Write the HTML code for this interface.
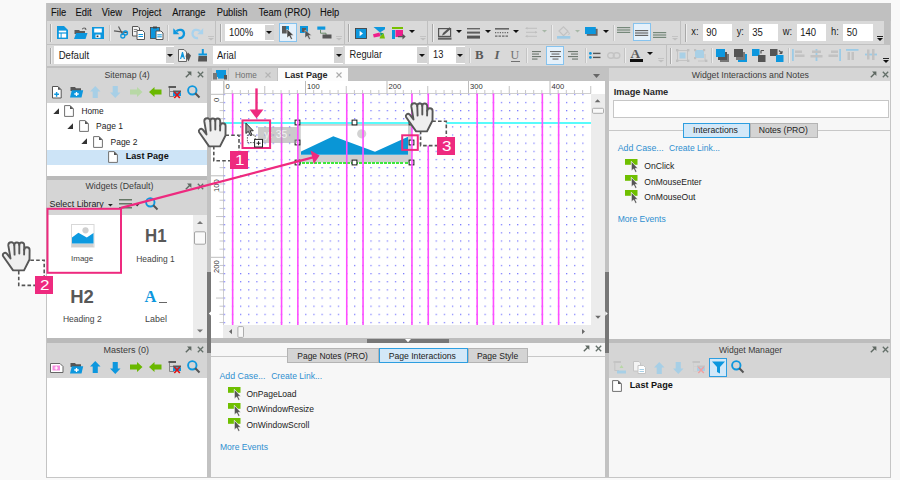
<!DOCTYPE html>
<html><head><meta charset="utf-8"><style>
html,body{margin:0;padding:0;}
body{width:900px;height:480px;overflow:hidden;position:relative;background:#f9f9f9;font-family:"Liberation Sans",sans-serif;}
.a{position:absolute;}
.t{position:absolute;white-space:nowrap;}
svg{overflow:visible;}
</style></head><body>
<div class="a" style="left:46px;top:3px;width:845px;height:475px;background:#c0c0c0;"></div>
<div class="a" style="left:46px;top:3px;width:1px;height:475px;background:#c4c4c4;"></div>
<div class="t" style="left:51.1px;top:8.69px;font-size:9.35px;line-height:9.35px;color:#111;font-weight:400;font-family:'Liberation Sans', sans-serif;transform-origin:0 7.91px;transform:scale(1.0,1.14);-webkit-text-stroke:0.1px #111;">File</div>
<div class="t" style="left:75.5px;top:8.69px;font-size:9.35px;line-height:9.35px;color:#111;font-weight:400;font-family:'Liberation Sans', sans-serif;transform-origin:0 7.91px;transform:scale(1.0,1.14);-webkit-text-stroke:0.1px #111;">Edit</div>
<div class="t" style="left:101.8px;top:8.69px;font-size:9.35px;line-height:9.35px;color:#111;font-weight:400;font-family:'Liberation Sans', sans-serif;transform-origin:0 7.91px;transform:scale(1.0,1.14);-webkit-text-stroke:0.1px #111;">View</div>
<div class="t" style="left:132.2px;top:8.69px;font-size:9.35px;line-height:9.35px;color:#111;font-weight:400;font-family:'Liberation Sans', sans-serif;transform-origin:0 7.91px;transform:scale(1.0,1.14);-webkit-text-stroke:0.1px #111;">Project</div>
<div class="t" style="left:172.2px;top:8.69px;font-size:9.35px;line-height:9.35px;color:#111;font-weight:400;font-family:'Liberation Sans', sans-serif;transform-origin:0 7.91px;transform:scale(1.0,1.14);-webkit-text-stroke:0.1px #111;">Arrange</div>
<div class="t" style="left:216.7px;top:8.69px;font-size:9.35px;line-height:9.35px;color:#111;font-weight:400;font-family:'Liberation Sans', sans-serif;transform-origin:0 7.91px;transform:scale(1.0,1.14);-webkit-text-stroke:0.1px #111;">Publish</div>
<div class="t" style="left:258.7px;top:8.69px;font-size:9.35px;line-height:9.35px;color:#111;font-weight:400;font-family:'Liberation Sans', sans-serif;transform-origin:0 7.91px;transform:scale(1.0,1.14);-webkit-text-stroke:0.1px #111;">Team (PRO)</div>
<div class="t" style="left:320px;top:8.69px;font-size:9.35px;line-height:9.35px;color:#111;font-weight:400;font-family:'Liberation Sans', sans-serif;transform-origin:0 7.91px;transform:scale(1.0,1.14);-webkit-text-stroke:0.1px #111;">Help</div>
<div class="a" style="left:47px;top:21px;width:168px;height:23px;background:#d9d9d9;"></div>
<div class="a" style="left:216px;top:21px;width:128px;height:23px;background:#d9d9d9;"></div>
<div class="a" style="left:345px;top:21px;width:81.5px;height:23px;background:#d9d9d9;"></div>
<div class="a" style="left:427.5px;top:21px;width:252.5px;height:23px;background:#d9d9d9;"></div>
<div class="a" style="left:681px;top:21px;width:203px;height:23px;background:#d9d9d9;"></div>
<div class="a" style="left:47px;top:45px;width:619px;height:21px;background:#d9d9d9;"></div>
<div class="a" style="left:667px;top:45px;width:223px;height:21px;background:#d9d9d9;"></div>
<div class="a" style="left:50px;top:24px;width:1px;height:18px;background:#a8a8a8;"></div>
<div class="a" style="left:51px;top:24px;width:1px;height:18px;background:#eeeeee;"></div>
<div class="a" style="left:220px;top:24px;width:1px;height:18px;background:#a8a8a8;"></div>
<div class="a" style="left:221px;top:24px;width:1px;height:18px;background:#eeeeee;"></div>
<div class="a" style="left:348px;top:24px;width:1px;height:18px;background:#a8a8a8;"></div>
<div class="a" style="left:349px;top:24px;width:1px;height:18px;background:#eeeeee;"></div>
<div class="a" style="left:432px;top:24px;width:1px;height:18px;background:#a8a8a8;"></div>
<div class="a" style="left:433px;top:24px;width:1px;height:18px;background:#eeeeee;"></div>
<div class="a" style="left:684.5px;top:24px;width:1px;height:18px;background:#a8a8a8;"></div>
<div class="a" style="left:685.5px;top:24px;width:1px;height:18px;background:#eeeeee;"></div>
<div class="a" style="left:50px;top:48px;width:1px;height:16px;background:#a8a8a8;"></div>
<div class="a" style="left:51px;top:48px;width:1px;height:16px;background:#eeeeee;"></div>
<div class="a" style="left:670px;top:48px;width:1px;height:16px;background:#a8a8a8;"></div>
<div class="a" style="left:671px;top:48px;width:1px;height:16px;background:#eeeeee;"></div>
<div class="a" style="left:109px;top:25px;width:1px;height:16px;background:#c4c4c4;"></div>
<div class="a" style="left:110px;top:25px;width:1px;height:16px;background:#ececec;"></div>
<div class="a" style="left:167px;top:25px;width:1px;height:16px;background:#c4c4c4;"></div>
<div class="a" style="left:168px;top:25px;width:1px;height:16px;background:#ececec;"></div>
<div class="a" style="left:551px;top:25px;width:1px;height:16px;background:#c4c4c4;"></div>
<div class="a" style="left:552px;top:25px;width:1px;height:16px;background:#ececec;"></div>
<div class="a" style="left:613px;top:25px;width:1px;height:16px;background:#c4c4c4;"></div>
<div class="a" style="left:614px;top:25px;width:1px;height:16px;background:#ececec;"></div>
<div class="a" style="left:469px;top:48px;width:1px;height:15px;background:#c4c4c4;"></div>
<div class="a" style="left:470px;top:48px;width:1px;height:15px;background:#ececec;"></div>
<div class="a" style="left:526px;top:48px;width:1px;height:15px;background:#c4c4c4;"></div>
<div class="a" style="left:527px;top:48px;width:1px;height:15px;background:#ececec;"></div>
<div class="a" style="left:585px;top:48px;width:1px;height:15px;background:#c4c4c4;"></div>
<div class="a" style="left:586px;top:48px;width:1px;height:15px;background:#ececec;"></div>
<div class="a" style="left:624px;top:48px;width:1px;height:15px;background:#c4c4c4;"></div>
<div class="a" style="left:625px;top:48px;width:1px;height:15px;background:#ececec;"></div>
<div class="a" style="left:711px;top:48px;width:1px;height:15px;background:#c4c4c4;"></div>
<div class="a" style="left:712px;top:48px;width:1px;height:15px;background:#ececec;"></div>
<div class="a" style="left:788px;top:48px;width:1px;height:15px;background:#c4c4c4;"></div>
<div class="a" style="left:789px;top:48px;width:1px;height:15px;background:#ececec;"></div>
<div class="a" style="left:224.7px;top:24px;width:49.3px;height:16.7px;background:#ffffff;"></div>
<div class="a" style="left:264.7px;top:24.5px;width:9.3px;height:15.7px;background:#d4d4d4;"></div>
<svg class="a" style="left:266.34999999999997px;top:30.85px;" width="6" height="3" viewBox="0 0 6 3"><path d="M0 0H6L3 3Z" fill="#111"/></svg>
<div class="t" style="left:229px;top:28.16px;font-size:9.5px;line-height:9.5px;color:#1a1a1a;font-weight:400;font-family:'Liberation Sans', sans-serif;transform-origin:0 8.04px;transform:scale(1.0,1.1);">100%</div>
<div class="t" style="left:691.3px;top:28.29px;font-size:9.35px;line-height:9.35px;color:#1a1a1a;font-weight:400;font-family:'Liberation Sans', sans-serif;transform-origin:0 7.91px;transform:scale(1.0,1.1);">x:</div>
<div class="a" style="left:702.7px;top:24px;width:29.5px;height:16.6px;background:#ffffff;"></div>
<div class="t" style="left:706.2px;top:28.16px;font-size:9.5px;line-height:9.5px;color:#1a1a1a;font-weight:400;font-family:'Liberation Sans', sans-serif;transform-origin:0 8.04px;transform:scale(1.0,1.1);">90</div>
<div class="t" style="left:736.7px;top:28.29px;font-size:9.35px;line-height:9.35px;color:#1a1a1a;font-weight:400;font-family:'Liberation Sans', sans-serif;transform-origin:0 7.91px;transform:scale(1.0,1.1);">y:</div>
<div class="a" style="left:748.7px;top:24px;width:29.5px;height:16.6px;background:#ffffff;"></div>
<div class="t" style="left:752.2px;top:28.16px;font-size:9.5px;line-height:9.5px;color:#1a1a1a;font-weight:400;font-family:'Liberation Sans', sans-serif;transform-origin:0 8.04px;transform:scale(1.0,1.1);">35</div>
<div class="t" style="left:782.7px;top:28.29px;font-size:9.35px;line-height:9.35px;color:#1a1a1a;font-weight:400;font-family:'Liberation Sans', sans-serif;transform-origin:0 7.91px;transform:scale(1.0,1.1);">w:</div>
<div class="a" style="left:796.7px;top:24px;width:29.5px;height:16.6px;background:#ffffff;"></div>
<div class="t" style="left:800.2px;top:28.16px;font-size:9.5px;line-height:9.5px;color:#1a1a1a;font-weight:400;font-family:'Liberation Sans', sans-serif;transform-origin:0 8.04px;transform:scale(1.0,1.1);">140</div>
<div class="t" style="left:831px;top:28.29px;font-size:9.35px;line-height:9.35px;color:#1a1a1a;font-weight:400;font-family:'Liberation Sans', sans-serif;transform-origin:0 7.91px;transform:scale(1.0,1.1);">h:</div>
<div class="a" style="left:843.2px;top:24px;width:29.5px;height:16.6px;background:#ffffff;"></div>
<div class="t" style="left:846.7px;top:28.16px;font-size:9.5px;line-height:9.5px;color:#1a1a1a;font-weight:400;font-family:'Liberation Sans', sans-serif;transform-origin:0 8.04px;transform:scale(1.0,1.1);">50</div>
<div class="a" style="left:54px;top:46px;width:120px;height:18px;background:#ffffff;"></div>
<div class="a" style="left:166px;top:47px;width:8px;height:16px;background:#d4d4d4;"></div>
<svg class="a" style="left:167.0px;top:53.5px;" width="6" height="3" viewBox="0 0 6 3"><path d="M0 0H6L3 3Z" fill="#111"/></svg>
<div class="t" style="left:58.7px;top:51.17px;font-size:9.6px;line-height:9.6px;color:#1a1a1a;font-weight:400;font-family:'Liberation Sans', sans-serif;transform-origin:0 8.13px;transform:scale(1.0,1.12);">Default</div>
<div class="a" style="left:213px;top:46px;width:130px;height:18px;background:#ffffff;"></div>
<div class="a" style="left:334px;top:47px;width:9px;height:16px;background:#d4d4d4;"></div>
<svg class="a" style="left:335.5px;top:53.5px;" width="6" height="3" viewBox="0 0 6 3"><path d="M0 0H6L3 3Z" fill="#111"/></svg>
<div class="t" style="left:217px;top:51.26px;font-size:9.5px;line-height:9.5px;color:#1a1a1a;font-weight:400;font-family:'Liberation Sans', sans-serif;transform-origin:0 8.04px;transform:scale(1.0,1.12);">Arial</div>
<div class="a" style="left:345.3px;top:46px;width:81.4px;height:18px;background:#ffffff;"></div>
<div class="a" style="left:417.3px;top:47px;width:9.4px;height:16px;background:#d4d4d4;"></div>
<svg class="a" style="left:419.0px;top:53.5px;" width="6" height="3" viewBox="0 0 6 3"><path d="M0 0H6L3 3Z" fill="#111"/></svg>
<div class="t" style="left:349.5px;top:51.43px;font-size:9.3px;line-height:9.3px;color:#1a1a1a;font-weight:400;font-family:'Liberation Sans', sans-serif;transform-origin:0 7.87px;transform:scale(1.0,1.12);">Regular</div>
<div class="a" style="left:428.7px;top:46px;width:36px;height:18px;background:#ffffff;"></div>
<div class="a" style="left:456px;top:47px;width:8.7px;height:16px;background:#d4d4d4;"></div>
<svg class="a" style="left:457.35px;top:53.5px;" width="6" height="3" viewBox="0 0 6 3"><path d="M0 0H6L3 3Z" fill="#111"/></svg>
<div class="t" style="left:433px;top:51.43px;font-size:9.3px;line-height:9.3px;color:#1a1a1a;font-weight:400;font-family:'Liberation Sans', sans-serif;transform-origin:0 7.87px;transform:scale(1.0,1.12);">13</div>
<div class="a" style="left:47px;top:67.5px;width:160px;height:35.5px;background:#d5d5d5;"></div>
<div class="a" style="left:47px;top:103px;width:160px;height:72.5px;background:#ffffff;"></div>
<div class="a" style="left:47px;top:175.5px;width:160px;height:4.5px;background:#bababa;"></div>
<div class="a" style="left:47px;top:180px;width:160px;height:35px;background:#d5d5d5;"></div>
<div class="a" style="left:47px;top:214.5px;width:146px;height:123.5px;background:#ffffff;"></div>
<div class="a" style="left:193px;top:214.5px;width:14px;height:123.5px;background:#ececec;"></div>
<div class="a" style="left:47px;top:338px;width:160px;height:5px;background:#bababa;"></div>
<div class="a" style="left:47px;top:343px;width:160px;height:34.5px;background:#d5d5d5;"></div>
<div class="a" style="left:47px;top:377.5px;width:160px;height:99.5px;background:#ffffff;"></div>
<div class="a" style="left:207px;top:67.5px;width:4px;height:410.5px;background:#c2c2c2;"></div>
<div class="a" style="left:207px;top:271.7px;width:4px;height:81.5px;background:#777777;"></div>
<div class="a" style="left:211px;top:67.5px;width:394px;height:13.5px;background:#c2c2c2;"></div>
<div class="a" style="left:211px;top:81px;width:394px;height:257px;background:#ffffff;"></div>
<div class="a" style="left:211px;top:338px;width:394px;height:5px;background:#bdbdbd;"></div>
<div class="a" style="left:367.3px;top:339px;width:81.4px;height:3.7px;background:#777777;"></div>
<div class="a" style="left:211px;top:343px;width:394px;height:134px;background:#f7f7f7;"></div>
<div class="a" style="left:605px;top:67.5px;width:4px;height:410.5px;background:#c2c2c2;"></div>
<div class="a" style="left:605px;top:271.7px;width:4px;height:81.5px;background:#777777;"></div>
<div class="a" style="left:609px;top:67.5px;width:281px;height:13.8px;background:#d5d5d5;"></div>
<div class="a" style="left:609px;top:81.3px;width:281px;height:257.7px;background:#f7f7f7;"></div>
<div class="a" style="left:609px;top:339px;width:281px;height:4px;background:#bdbdbd;"></div>
<div class="a" style="left:609px;top:343px;width:281px;height:34.5px;background:#d5d5d5;"></div>
<div class="a" style="left:609px;top:377.5px;width:281px;height:99.5px;background:#f7f7f7;"></div>
<div class="a" style="left:46px;top:477px;width:845px;height:1px;background:#c6c6c6;"></div>
<div class="a" style="left:890px;top:21px;width:1px;height:457px;background:#c6c6c6;"></div>
<div class="t" style="left:104.5px;top:70.79px;font-size:8.75px;line-height:8.75px;color:#3c3c3c;font-weight:400;font-family:'Liberation Sans', sans-serif;transform-origin:0 7.41px;transform:scale(1.0,1.08);">Sitemap (4)</div>
<div class="t" style="left:85.5px;top:182.15px;font-size:8.8px;line-height:8.8px;color:#3c3c3c;font-weight:400;font-family:'Liberation Sans', sans-serif;transform-origin:0 7.45px;transform:scale(1.0,1.08);">Widgets (Default)</div>
<div class="t" style="left:103.5px;top:345.58px;font-size:9.0px;line-height:9.0px;color:#3c3c3c;font-weight:400;font-family:'Liberation Sans', sans-serif;transform-origin:0 7.62px;transform:scale(1.0,1.08);">Masters (0)</div>
<div class="t" style="left:691.7px;top:70.79px;font-size:8.75px;line-height:8.75px;color:#3c3c3c;font-weight:400;font-family:'Liberation Sans', sans-serif;transform-origin:0 7.41px;transform:scale(1.0,1.08);">Widget Interactions and Notes</div>
<div class="t" style="left:718.9px;top:345.88px;font-size:8.65px;line-height:8.65px;color:#3c3c3c;font-weight:400;font-family:'Liberation Sans', sans-serif;transform-origin:0 7.32px;transform:scale(1.0,1.08);">Widget Manager</div>
<div class="t" style="left:49.5px;top:200.17px;font-size:8.9px;line-height:8.9px;color:#222;font-weight:400;font-family:'Liberation Sans', sans-serif;">Select Library</div>
<div class="t" style="left:81.5px;top:107.17px;font-size:8.3px;line-height:8.3px;color:#222;font-weight:400;font-family:'Liberation Sans', sans-serif;">Home</div>
<div class="t" style="left:96.1px;top:122.40px;font-size:8.5px;line-height:8.5px;color:#222;font-weight:400;font-family:'Liberation Sans', sans-serif;">Page 1</div>
<div class="t" style="left:110.5px;top:137.60px;font-size:8.5px;line-height:8.5px;color:#222;font-weight:400;font-family:'Liberation Sans', sans-serif;">Page 2</div>
<div class="a" style="left:47px;top:149.5px;width:160px;height:15px;background:#cde4f7;"></div>
<div class="t" style="left:125.75px;top:152.30px;font-size:9.1px;line-height:9.1px;color:#111;font-weight:700;font-family:'Liberation Sans', sans-serif;">Last Page</div>
<div class="t" style="left:71px;top:255.43px;font-size:8.0px;line-height:8.0px;color:#444;font-weight:400;font-family:'Liberation Sans', sans-serif;">Image</div>
<div class="t" style="left:136.25px;top:255.05px;font-size:8.45px;line-height:8.45px;color:#444;font-weight:400;font-family:'Liberation Sans', sans-serif;">Heading 1</div>
<div class="t" style="left:62.9px;top:315.40px;font-size:8.5px;line-height:8.5px;color:#444;font-weight:400;font-family:'Liberation Sans', sans-serif;">Heading 2</div>
<div class="t" style="left:145px;top:315.02px;font-size:8.95px;line-height:8.95px;color:#444;font-weight:400;font-family:'Liberation Sans', sans-serif;">Label</div>
<div class="t" style="left:145.2px;top:226.94px;font-size:18.5px;line-height:18.5px;color:#585858;font-weight:700;font-family:'Liberation Sans', sans-serif;transform-origin:0 15.66px;transform:scale(0.91,1.0);">H1</div>
<div class="t" style="left:70.2px;top:288.14px;font-size:18.5px;line-height:18.5px;color:#585858;font-weight:700;font-family:'Liberation Sans', sans-serif;">H2</div>
<div class="a" style="left:211.7px;top:68px;width:16.6px;height:12.7px;background:#d0d0d0;"></div>
<div class="a" style="left:229px;top:68px;width:47.7px;height:12.7px;background:#d4d4d4;"></div>
<div class="t" style="left:235px;top:72.32px;font-size:8.13px;line-height:8.13px;color:#6e6e6e;font-weight:400;font-family:'Liberation Sans', sans-serif;transform-origin:0 6.88px;transform:scale(1.0,1.12);">Home</div>
<div class="a" style="left:277.5px;top:68px;width:70px;height:13px;background:#fcfcfc;"></div>
<div class="t" style="left:284.7px;top:70.70px;font-size:9.1px;line-height:9.1px;color:#262626;font-weight:700;font-family:'Liberation Sans', sans-serif;">Last Page</div>
<div class="a" style="left:211px;top:355.5px;width:394px;height:1px;background:#c8c8c8;"></div>
<div class="a" style="left:287.3px;top:348px;width:91.4px;height:15.3px;background:#d4d4d4;border:1px solid #b4b4b4;box-sizing:border-box;"></div>
<div class="a" style="left:379px;top:348px;width:89px;height:15.3px;background:#d3e8f8;border:1px solid #2d9ee0;box-sizing:border-box;"></div>
<div class="a" style="left:468px;top:348px;width:60.4px;height:15.3px;background:#d4d4d4;border:1px solid #b4b4b4;box-sizing:border-box;"></div>
<div class="t" style="left:297.3px;top:352.42px;font-size:8.48px;line-height:8.48px;color:#222;font-weight:400;font-family:'Liberation Sans', sans-serif;transform-origin:0 7.18px;transform:scale(1.0,1.1);">Page Notes (PRO)</div>
<div class="t" style="left:388.7px;top:352.28px;font-size:8.65px;line-height:8.65px;color:#222;font-weight:400;font-family:'Liberation Sans', sans-serif;transform-origin:0 7.32px;transform:scale(1.0,1.1);">Page Interactions</div>
<div class="t" style="left:476.9px;top:352.35px;font-size:8.56px;line-height:8.56px;color:#222;font-weight:400;font-family:'Liberation Sans', sans-serif;transform-origin:0 7.25px;transform:scale(1.0,1.1);">Page Style</div>
<div class="t" style="left:219.5px;top:371.75px;font-size:8.8px;line-height:8.8px;color:#2f8fd0;font-weight:400;font-family:'Liberation Sans', sans-serif;">Add Case...</div>
<div class="t" style="left:271.2px;top:371.95px;font-size:8.57px;line-height:8.57px;color:#2f8fd0;font-weight:400;font-family:'Liberation Sans', sans-serif;">Create Link...</div>
<div class="t" style="left:246.4px;top:390.38px;font-size:8.53px;line-height:8.53px;color:#222;font-weight:400;font-family:'Liberation Sans', sans-serif;">OnPageLoad</div>
<div class="t" style="left:246.4px;top:405.08px;font-size:8.53px;line-height:8.53px;color:#222;font-weight:400;font-family:'Liberation Sans', sans-serif;">OnWindowResize</div>
<div class="t" style="left:246.4px;top:420.58px;font-size:8.53px;line-height:8.53px;color:#222;font-weight:400;font-family:'Liberation Sans', sans-serif;">OnWindowScroll</div>
<div class="t" style="left:220px;top:443.06px;font-size:8.55px;line-height:8.55px;color:#2f8fd0;font-weight:400;font-family:'Liberation Sans', sans-serif;">More Events</div>
<div class="t" style="left:613.7px;top:87.75px;font-size:9.27px;line-height:9.27px;color:#2a2a2a;font-weight:700;font-family:'Liberation Sans', sans-serif;">Image Name</div>
<div class="a" style="left:613.3px;top:99.5px;width:275.4px;height:18.2px;background:#ffffff;border:1.4px solid #c6c6c6;box-sizing:border-box;"></div>
<div class="a" style="left:609px;top:130px;width:281px;height:1px;background:#c8c8c8;"></div>
<div class="a" style="left:683px;top:122.5px;width:67px;height:15px;background:#d3e8f8;border:1px solid #2d9ee0;box-sizing:border-box;"></div>
<div class="a" style="left:750px;top:122.5px;width:68.3px;height:15px;background:#d4d4d4;border:1px solid #b4b4b4;box-sizing:border-box;"></div>
<div class="t" style="left:693px;top:125.84px;font-size:8.7px;line-height:8.7px;color:#222;font-weight:400;font-family:'Liberation Sans', sans-serif;transform-origin:0 7.36px;transform:scale(1.0,1.1);">Interactions</div>
<div class="t" style="left:758.7px;top:125.91px;font-size:8.61px;line-height:8.61px;color:#222;font-weight:400;font-family:'Liberation Sans', sans-serif;transform-origin:0 7.29px;transform:scale(1.0,1.1);">Notes (PRO)</div>
<div class="t" style="left:617.7px;top:143.75px;font-size:8.8px;line-height:8.8px;color:#2f8fd0;font-weight:400;font-family:'Liberation Sans', sans-serif;">Add Case...</div>
<div class="t" style="left:669px;top:143.95px;font-size:8.57px;line-height:8.57px;color:#2f8fd0;font-weight:400;font-family:'Liberation Sans', sans-serif;">Create Link...</div>
<div class="t" style="left:644.3px;top:161.72px;font-size:8.6px;line-height:8.6px;color:#222;font-weight:400;font-family:'Liberation Sans', sans-serif;">OnClick</div>
<div class="t" style="left:644.3px;top:177.68px;font-size:8.53px;line-height:8.53px;color:#222;font-weight:400;font-family:'Liberation Sans', sans-serif;">OnMouseEnter</div>
<div class="t" style="left:644.3px;top:193.02px;font-size:8.6px;line-height:8.6px;color:#222;font-weight:400;font-family:'Liberation Sans', sans-serif;">OnMouseOut</div>
<div class="t" style="left:617.7px;top:215.06px;font-size:8.55px;line-height:8.55px;color:#2f8fd0;font-weight:400;font-family:'Liberation Sans', sans-serif;">More Events</div>
<div class="t" style="left:629.8px;top:381.30px;font-size:9.1px;line-height:9.1px;color:#111;font-weight:700;font-family:'Liberation Sans', sans-serif;">Last Page</div>
<div class="a" style="left:223px;top:81px;width:1px;height:257px;background:#cfcfcf;"></div>
<div class="a" style="left:223px;top:93px;width:368.25px;height:1px;background:#cfcfcf;"></div>
<svg class="a" style="left:0px;top:0px;" width="900" height="480" viewBox="0 0 900 480"><rect x="223.50" y="81" width="1" height="12.5" fill="#bdbdbd"/><rect x="231.65" y="90" width="1" height="3.5" fill="#c8c8c8"/><rect x="239.80" y="90" width="1" height="3.5" fill="#c8c8c8"/><rect x="247.95" y="90" width="1" height="3.5" fill="#c8c8c8"/><rect x="256.10" y="90" width="1" height="3.5" fill="#c8c8c8"/><rect x="264.25" y="86" width="1" height="7.5" fill="#c4c4c4"/><rect x="272.40" y="90" width="1" height="3.5" fill="#c8c8c8"/><rect x="280.55" y="90" width="1" height="3.5" fill="#c8c8c8"/><rect x="288.70" y="90" width="1" height="3.5" fill="#c8c8c8"/><rect x="296.85" y="90" width="1" height="3.5" fill="#c8c8c8"/><rect x="305.00" y="81" width="1" height="12.5" fill="#bdbdbd"/><rect x="313.15" y="90" width="1" height="3.5" fill="#c8c8c8"/><rect x="321.30" y="90" width="1" height="3.5" fill="#c8c8c8"/><rect x="329.45" y="90" width="1" height="3.5" fill="#c8c8c8"/><rect x="337.60" y="90" width="1" height="3.5" fill="#c8c8c8"/><rect x="345.75" y="86" width="1" height="7.5" fill="#c4c4c4"/><rect x="353.90" y="90" width="1" height="3.5" fill="#c8c8c8"/><rect x="362.05" y="90" width="1" height="3.5" fill="#c8c8c8"/><rect x="370.20" y="90" width="1" height="3.5" fill="#c8c8c8"/><rect x="378.35" y="90" width="1" height="3.5" fill="#c8c8c8"/><rect x="386.50" y="81" width="1" height="12.5" fill="#bdbdbd"/><rect x="394.65" y="90" width="1" height="3.5" fill="#c8c8c8"/><rect x="402.80" y="90" width="1" height="3.5" fill="#c8c8c8"/><rect x="410.95" y="90" width="1" height="3.5" fill="#c8c8c8"/><rect x="419.10" y="90" width="1" height="3.5" fill="#c8c8c8"/><rect x="427.25" y="86" width="1" height="7.5" fill="#c4c4c4"/><rect x="435.40" y="90" width="1" height="3.5" fill="#c8c8c8"/><rect x="443.55" y="90" width="1" height="3.5" fill="#c8c8c8"/><rect x="451.70" y="90" width="1" height="3.5" fill="#c8c8c8"/><rect x="459.85" y="90" width="1" height="3.5" fill="#c8c8c8"/><rect x="468.00" y="81" width="1" height="12.5" fill="#bdbdbd"/><rect x="476.15" y="90" width="1" height="3.5" fill="#c8c8c8"/><rect x="484.30" y="90" width="1" height="3.5" fill="#c8c8c8"/><rect x="492.45" y="90" width="1" height="3.5" fill="#c8c8c8"/><rect x="500.60" y="90" width="1" height="3.5" fill="#c8c8c8"/><rect x="508.75" y="86" width="1" height="7.5" fill="#c4c4c4"/><rect x="516.90" y="90" width="1" height="3.5" fill="#c8c8c8"/><rect x="525.05" y="90" width="1" height="3.5" fill="#c8c8c8"/><rect x="533.20" y="90" width="1" height="3.5" fill="#c8c8c8"/><rect x="541.35" y="90" width="1" height="3.5" fill="#c8c8c8"/><rect x="549.50" y="81" width="1" height="12.5" fill="#bdbdbd"/><rect x="557.65" y="90" width="1" height="3.5" fill="#c8c8c8"/><rect x="565.80" y="90" width="1" height="3.5" fill="#c8c8c8"/><rect x="573.95" y="90" width="1" height="3.5" fill="#c8c8c8"/><rect x="582.10" y="90" width="1" height="3.5" fill="#c8c8c8"/><rect x="590.25" y="86" width="1" height="7.5" fill="#c4c4c4"/><rect x="211" y="93.80" width="12.5" height="1" fill="#bdbdbd"/><rect x="219.5" y="101.95" width="3.5" height="1" fill="#c8c8c8"/><rect x="219.5" y="110.10" width="3.5" height="1" fill="#c8c8c8"/><rect x="219.5" y="118.25" width="3.5" height="1" fill="#c8c8c8"/><rect x="219.5" y="126.40" width="3.5" height="1" fill="#c8c8c8"/><rect x="216" y="134.55" width="7" height="1" fill="#c4c4c4"/><rect x="219.5" y="142.70" width="3.5" height="1" fill="#c8c8c8"/><rect x="219.5" y="150.85" width="3.5" height="1" fill="#c8c8c8"/><rect x="219.5" y="159.00" width="3.5" height="1" fill="#c8c8c8"/><rect x="219.5" y="167.15" width="3.5" height="1" fill="#c8c8c8"/><rect x="211" y="175.30" width="12.5" height="1" fill="#bdbdbd"/><rect x="219.5" y="183.45" width="3.5" height="1" fill="#c8c8c8"/><rect x="219.5" y="191.60" width="3.5" height="1" fill="#c8c8c8"/><rect x="219.5" y="199.75" width="3.5" height="1" fill="#c8c8c8"/><rect x="219.5" y="207.90" width="3.5" height="1" fill="#c8c8c8"/><rect x="216" y="216.05" width="7" height="1" fill="#c4c4c4"/><rect x="219.5" y="224.20" width="3.5" height="1" fill="#c8c8c8"/><rect x="219.5" y="232.35" width="3.5" height="1" fill="#c8c8c8"/><rect x="219.5" y="240.50" width="3.5" height="1" fill="#c8c8c8"/><rect x="219.5" y="248.65" width="3.5" height="1" fill="#c8c8c8"/><rect x="211" y="256.80" width="12.5" height="1" fill="#bdbdbd"/><rect x="219.5" y="264.95" width="3.5" height="1" fill="#c8c8c8"/><rect x="219.5" y="273.10" width="3.5" height="1" fill="#c8c8c8"/><rect x="219.5" y="281.25" width="3.5" height="1" fill="#c8c8c8"/><rect x="219.5" y="289.40" width="3.5" height="1" fill="#c8c8c8"/><rect x="216" y="297.55" width="7" height="1" fill="#c4c4c4"/><rect x="219.5" y="305.70" width="3.5" height="1" fill="#c8c8c8"/><rect x="219.5" y="313.85" width="3.5" height="1" fill="#c8c8c8"/><rect x="219.5" y="322.00" width="3.5" height="1" fill="#c8c8c8"/></svg>
<div class="t" style="left:225.5px;top:83.17px;font-size:7.6px;line-height:7.6px;color:#333;font-weight:400;font-family:'Liberation Sans', sans-serif;">0</div>
<div class="t" style="left:307.0px;top:83.17px;font-size:7.6px;line-height:7.6px;color:#333;font-weight:400;font-family:'Liberation Sans', sans-serif;">100</div>
<div class="t" style="left:388.5px;top:83.17px;font-size:7.6px;line-height:7.6px;color:#333;font-weight:400;font-family:'Liberation Sans', sans-serif;">200</div>
<div class="t" style="left:470.0px;top:83.17px;font-size:7.6px;line-height:7.6px;color:#333;font-weight:400;font-family:'Liberation Sans', sans-serif;">300</div>
<div class="t" style="left:551.5px;top:83.17px;font-size:7.6px;line-height:7.6px;color:#333;font-weight:400;font-family:'Liberation Sans', sans-serif;">400</div>
<div class="t" style="left:212.74px;top:101.60px;font-size:7.6px;line-height:7.6px;color:#333;transform-origin:0 0;transform:rotate(-90deg);">0</div>
<div class="t" style="left:212.74px;top:191.50px;font-size:7.6px;line-height:7.6px;color:#333;transform-origin:0 0;transform:rotate(-90deg);">100</div>
<div class="t" style="left:212.74px;top:273.00px;font-size:7.6px;line-height:7.6px;color:#333;transform-origin:0 0;transform:rotate(-90deg);">200</div>
<svg class="a" style="left:223px;top:93.5px;" width="366.5" height="231.5" viewBox="0 0 366.5 231.5"><defs><pattern id="dots" x="0.7" y="-0.3" width="8.15" height="8.15" patternUnits="userSpaceOnUse"><rect x="0.1" y="0.1" width="1.1" height="1.1" fill="#5050ff"/></pattern></defs><rect x="0" y="0" width="366.5" height="231.5" fill="url(#dots)"/></svg>
<svg class="a" style="left:297px;top:123px;" width="115" height="40" viewBox="0 0 115 40"><rect x="0.5" y="0.7" width="114.2" height="38.8" fill="#cfcfcf"/><rect x="3.8" y="2.8" width="107.2" height="29.2" fill="#ffffff"/><circle cx="64.7" cy="10.8" r="4.6" fill="#d2d2d2"/><path d="M4 28.4 L36.3 13.3 L78 28.7 L111 13.7 L111 31.8 L4 31.8 Z" fill="#0a96d6"/></svg>
<div class="a" style="left:223.5px;top:121.9px;width:367.75px;height:2px;background:#58fbfb;"></div>
<div class="a" style="left:297.5px;top:161.6px;width:114px;height:2px;background:repeating-linear-gradient(90deg,#3de83d 0 3px,transparent 3px 4.1px);"></div>
<svg class="a" style="left:0px;top:0px;" width="900" height="480" viewBox="0 0 900 480"><rect x="295.10" y="120.10" width="4.8" height="4.8" fill="#fff" stroke="#1a1a1a" stroke-width="1"/><rect x="295.10" y="140.10" width="4.8" height="4.8" fill="#fff" stroke="#1a1a1a" stroke-width="1"/><rect x="295.10" y="160.10" width="4.8" height="4.8" fill="#fff" stroke="#1a1a1a" stroke-width="1"/><rect x="352.10" y="120.10" width="4.8" height="4.8" fill="#fff" stroke="#1a1a1a" stroke-width="1"/><rect x="352.10" y="160.10" width="4.8" height="4.8" fill="#fff" stroke="#1a1a1a" stroke-width="1"/><rect x="409.10" y="120.10" width="4.8" height="4.8" fill="#fff" stroke="#1a1a1a" stroke-width="1"/><rect x="409.10" y="140.10" width="4.8" height="4.8" fill="#fff" stroke="#1a1a1a" stroke-width="1"/><rect x="409.10" y="160.10" width="4.8" height="4.8" fill="#fff" stroke="#1a1a1a" stroke-width="1"/></svg>
<svg class="a" style="left:0px;top:0px;" width="900" height="480" viewBox="0 0 900 480"><rect x="231.85" y="93.5" width="1.6" height="231.5" fill="#ff4dff"/><rect x="280.75" y="93.5" width="1.6" height="231.5" fill="#ff4dff"/><rect x="297.05" y="93.5" width="1.6" height="231.5" fill="#ff4dff"/><rect x="345.95" y="93.5" width="1.6" height="231.5" fill="#ff4dff"/><rect x="362.25" y="93.5" width="1.6" height="231.5" fill="#ff4dff"/><rect x="411.15" y="93.5" width="1.6" height="231.5" fill="#ff4dff"/><rect x="427.45" y="93.5" width="1.6" height="231.5" fill="#ff4dff"/><rect x="476.35" y="93.5" width="1.6" height="231.5" fill="#ff4dff"/><rect x="492.65" y="93.5" width="1.6" height="231.5" fill="#ff4dff"/><rect x="541.55" y="93.5" width="1.6" height="231.5" fill="#ff4dff"/><rect x="557.85" y="93.5" width="1.6" height="231.5" fill="#ff4dff"/></svg>
<div class="a" style="left:591.25px;top:93.5px;width:13.75px;height:244.8px;background:#ececec;"></div>
<div class="a" style="left:223px;top:325px;width:368.25px;height:13.3px;background:#ececec;"></div>
<svg class="a" style="left:0px;top:0px;" width="900" height="480" viewBox="0 0 900 480"><path d="M594.8 102.3 L597.6 99.3 L600.4 102.3 Z" fill="#6a6a6a"/><path d="M595.2 315.7 L598 318.7 L600.8 315.7 Z" fill="#6a6a6a"/><path d="M232 329 L229 331.6 L232 334.2 Z" fill="#6a6a6a"/><path d="M582 329 L585 331.6 L582 334.2 Z" fill="#6a6a6a"/><rect x="592.5" y="108.3" width="11" height="5" rx="1" fill="#f8f8f8" stroke="#9a9a9a" stroke-width="0.8"/><rect x="237.9" y="326.6" width="5.6" height="10.8" rx="1" fill="#f8f8f8" stroke="#9a9a9a" stroke-width="0.8"/></svg>
<svg class="a" style="left:57px;top:26px;" width="11" height="13" viewBox="0 0 11 13"><path d="M0 0H7L11 4V13H0Z" fill="#0d97de"/><rect x="1.8" y="4.6" width="7.4" height="1.8" fill="#fff"/><rect x="1.8" y="7.6" width="1.8" height="4" fill="#fff"/><rect x="4.6" y="7.6" width="4.6" height="4" fill="#fff"/></svg>
<svg class="a" style="left:73.5px;top:25.5px;" width="14" height="14" viewBox="0 0 14 14"><path d="M0.5 4H5L6 5H11V8H0.5Z" fill="#5a5a5a"/><path d="M0 13L2.2 7H13.5L11.5 13Z" fill="#0d97de"/><path d="M8 3.2C9.5 1.6 11 1.8 12 3" stroke="#5a5a5a" stroke-width="1" fill="none"/><path d="M11.2 1.5L12.8 3.4L10.8 3.8Z" fill="#5a5a5a"/></svg>
<svg class="a" style="left:92px;top:27px;" width="12" height="12" viewBox="0 0 12 12"><path d="M0 0H12V12H0Z" fill="#0d97de"/><rect x="2.2" y="1.5" width="7.6" height="4" fill="#fff"/><rect x="3.5" y="7.6" width="5" height="3.2" fill="#fff"/><rect x="4.6" y="8.5" width="1.8" height="1.6" fill="#333"/></svg>
<svg class="a" style="left:113.5px;top:26px;" width="14" height="13" viewBox="0 0 14 13"><path d="M0 4.8L13 6.6" stroke="#5a5a5a" stroke-width="1.2"/><path d="M4.5 0.5L9 9" stroke="#5a5a5a" stroke-width="1.2"/><circle cx="8.8" cy="10" r="2" fill="none" stroke="#0d97de" stroke-width="1.3"/><circle cx="11.5" cy="7" r="2" fill="none" stroke="#0d97de" stroke-width="1.3"/></svg>
<svg class="a" style="left:132px;top:26px;" width="13" height="14" viewBox="0 0 13 14"><path d="M0.5 0.5H6L7.5 2V10H0.5Z" fill="#f4f4f4" stroke="#555" stroke-width="1"/><path d="M5 4.5H10.5L12.5 6.5V13.5H5Z" fill="#fff" stroke="#555" stroke-width="1"/><rect x="6.5" y="8" width="4.5" height="1" fill="#0d97de"/><rect x="6.5" y="10" width="4.5" height="1" fill="#0d97de"/><rect x="1.8" y="3" width="3.5" height="0.9" fill="#777"/><rect x="1.8" y="5" width="3" height="0.9" fill="#777"/></svg>
<svg class="a" style="left:150px;top:26px;" width="14" height="14" viewBox="0 0 14 14"><rect x="0.5" y="1.5" width="9" height="11" fill="#0d97de" stroke="#444" stroke-width="0.8"/><rect x="3" y="0.5" width="4" height="2" fill="#444"/><path d="M6 5H11L13 7V13.5H6Z" fill="#fff" stroke="#555" stroke-width="1"/><rect x="7.3" y="8.3" width="4.5" height="1" fill="#0d97de"/><rect x="7.3" y="10.3" width="4.5" height="1" fill="#0d97de"/></svg>
<svg class="a" style="left:172.5px;top:26.5px;" width="12.5" height="12" viewBox="0 0 12.5 12"><path d="M3.5 4.2C6 1.8 10.8 2.5 11 6.5C11.2 10 8 11.5 5.5 11" stroke="#0d97de" stroke-width="2.3" fill="none"/><path d="M0.3 1.2V7.2H6.3Z" fill="#0d97de"/></svg>
<svg class="a" style="left:190.5px;top:26.5px;" width="12.5" height="12" viewBox="0 0 12.5 12"><g transform="translate(12.5 0) scale(-1 1)"><path d="M3.5 4.2C6 1.8 10.8 2.5 11 6.5C11.2 10 8 11.5 5.5 11" stroke="#a9d3ee" stroke-width="2.3" fill="none"/><path d="M0.3 1.2V7.2H6.3Z" fill="#a9d3ee"/></g></svg>
<svg class="a" style="left:208.3px;top:36px;" width="6" height="5" viewBox="0 0 6 5"><rect x="0" y="0" width="6" height="0.8" fill="#bdbdbd"/><path d="M0 2H6L3 4.5Z" fill="#c0c0c0"/></svg>
<svg class="a" style="left:336px;top:36px;" width="6" height="5" viewBox="0 0 6 5"><rect x="0" y="0" width="6" height="0.8" fill="#bdbdbd"/><path d="M0 2H6L3 4.5Z" fill="#c0c0c0"/></svg>
<svg class="a" style="left:419.7px;top:36px;" width="6" height="5" viewBox="0 0 6 5"><rect x="0" y="0" width="6" height="0.8" fill="#bdbdbd"/><path d="M0 2H6L3 4.5Z" fill="#c0c0c0"/></svg>
<svg class="a" style="left:672px;top:36px;" width="6" height="5" viewBox="0 0 6 5"><rect x="0" y="0" width="6" height="0.8" fill="#bdbdbd"/><path d="M0 2H6L3 4.5Z" fill="#c0c0c0"/></svg>
<svg class="a" style="left:658px;top:58px;" width="6" height="5" viewBox="0 0 6 5"><rect x="0" y="0" width="6" height="0.8" fill="#bdbdbd"/><path d="M0 2H6L3 4.5Z" fill="#c0c0c0"/></svg>
<div class="a" style="left:279px;top:23.3px;width:18px;height:18.4px;background:#e5f1fb;border:1px solid #86c3ee;box-sizing:border-box;"></div>
<svg class="a" style="left:281px;top:25px;" width="14" height="14" viewBox="0 0 14 14"><rect x="1" y="1" width="6.5" height="7.5" fill="#5a5a5a"/><rect x="5" y="1" width="3" height="4" fill="#0d97de"/><path d="M6 4L6 13L8.2 11L10 14.5L11.5 13.8L9.8 10.4L12.6 10.2Z" fill="#444" stroke="#fff" stroke-width="0.5"/></svg>
<svg class="a" style="left:300px;top:25px;" width="13" height="14" viewBox="0 0 13 14"><rect x="0" y="1" width="8" height="7" fill="#0d97de"/><rect x="2" y="3" width="4" height="4" fill="#5a5a5a"/><path d="M5 5L5 13L7.2 11L9 14.5L10.5 13.8L8.8 10.4L11.6 10.2Z" fill="#555" stroke="#ddd" stroke-width="0.5"/></svg>
<svg class="a" style="left:317px;top:26px;" width="15" height="13" viewBox="0 0 15 13"><rect x="0.3" y="0.5" width="8" height="3.2" fill="#0d97de"/><path d="M3.5 3.7V7.2H9V9" stroke="#6b8c6b" stroke-width="1" fill="none"/><rect x="5.5" y="8.5" width="9" height="4" fill="#555"/></svg>
<svg class="a" style="left:355px;top:27.5px;" width="12" height="11" viewBox="0 0 12 11"><rect x="0.5" y="0.5" width="11" height="10" fill="#0d97de" stroke="#444" stroke-width="0.9"/><path d="M4.6 2.8V8.2L8 5.5Z" fill="#fff"/></svg>
<svg class="a" style="left:372.5px;top:26.5px;" width="12.5" height="12" viewBox="0 0 12.5 12"><path d="M0.5 0H12V2.2L7 5.6Z" fill="#0d97de"/><path d="M0 7.2L6.5 5.4L7.4 9.2L0.8 10.5Z" fill="#ee1f8c"/><path d="M7.5 9L10.6 6.3L12 11.6H6.5Z" fill="#77c000"/><path d="M7 5.6L10.6 6.3L7.5 9Z" fill="#1a9a6a"/></svg>
<svg class="a" style="left:391.5px;top:26.5px;" width="14" height="12" viewBox="0 0 14 12"><rect x="0" y="0" width="11" height="2" fill="#77c000"/><rect x="0" y="3" width="3" height="9" fill="#0d97de"/><rect x="3.5" y="3" width="7.5" height="7" fill="#ee1f8c"/><path d="M6 9H10.5V6.8L13.7 9.6L10.5 12.4V10.3H6Z" fill="#555"/></svg>
<svg class="a" style="left:408.5px;top:30.1px;" width="6" height="3" viewBox="0 0 6 3"><path d="M0 0H6L3.0 3Z" fill="#111"/></svg>
<svg class="a" style="left:438px;top:26.5px;" width="14" height="13" viewBox="0 0 14 13"><rect x="0.6" y="1.6" width="12" height="7.8" fill="none" stroke="#555" stroke-width="1.2"/><path d="M4 8.5L5 6L11.5 0.3L13 1.8L6.5 7.5Z" fill="#555"/><rect x="0" y="10.5" width="13.5" height="2.2" fill="#5f5f5f"/></svg>
<svg class="a" style="left:456.0px;top:30.1px;" width="6" height="3" viewBox="0 0 6 3"><path d="M0 0H6L3.0 3Z" fill="#111"/></svg>
<svg class="a" style="left:467px;top:27.5px;" width="13" height="11" viewBox="0 0 13 11"><rect x="0" y="0" width="13" height="1.4" fill="#666"/><rect x="0" y="3.6" width="13" height="2" fill="#5d5d5d"/><rect x="0" y="7.6" width="13" height="3" fill="#555"/></svg>
<svg class="a" style="left:484.5px;top:30.1px;" width="6" height="3" viewBox="0 0 6 3"><path d="M0 0H6L3.0 3Z" fill="#111"/></svg>
<svg class="a" style="left:495.3px;top:27.5px;" width="14" height="10" viewBox="0 0 14 10"><rect x="0" y="0" width="14" height="1.6" fill="#666"/><path d="M0 4.6H14" stroke="#666" stroke-width="1.2" stroke-dasharray="1.2 1.2"/><path d="M0 8.2H14" stroke="#666" stroke-width="1.2" stroke-dasharray="2.5 1"/></svg>
<svg class="a" style="left:513.0px;top:30.1px;" width="6" height="3" viewBox="0 0 6 3"><path d="M0 0H6L3.0 3Z" fill="#111"/></svg>
<svg class="a" style="left:524.5px;top:27px;" width="12.5" height="11" viewBox="0 0 12.5 11"><path d="M1 1.3H12M1 5.3H12M1 9.3H12" stroke="#bfbfbf" stroke-width="1"/><path d="M0 1.3L2.5 0V2.6Z M12.5 5.3L10 4V6.6Z M0 9.3L2.5 8V10.6Z" fill="#bfbfbf"/></svg>
<svg class="a" style="left:542.2px;top:30.35px;" width="5" height="2.5" viewBox="0 0 5 2.5"><path d="M0 0H5L2.5 2.5Z" fill="#a8b8a8"/></svg>
<svg class="a" style="left:556.5px;top:26px;" width="14" height="13" viewBox="0 0 14 13"><path d="M2 5L6.5 0.8L11 5.2L6.5 9.6Z" fill="none" stroke="#c2c2c2" stroke-width="1.2"/><path d="M11.5 6C12.6 7.5 12.6 8.5 11.5 8.5" stroke="#c2c2c2" fill="none"/><rect x="0" y="10" width="13.3" height="2.7" fill="#9fcbe6"/></svg>
<svg class="a" style="left:574.5px;top:30.35px;" width="5" height="2.5" viewBox="0 0 5 2.5"><path d="M0 0H5L2.5 2.5Z" fill="#a8b8a8"/></svg>
<svg class="a" style="left:585.3px;top:27.3px;" width="13" height="9" viewBox="0 0 13 9"><rect x="1.8" y="1.8" width="10.8" height="7" fill="#666"/><rect x="0" y="0" width="10.8" height="7" fill="#0d97de"/></svg>
<svg class="a" style="left:603.0px;top:30.3px;" width="6" height="3" viewBox="0 0 6 3"><path d="M0 0H6L3.0 3Z" fill="#111"/></svg>
<svg class="a" style="left:617.3px;top:26.5px;" width="13.5" height="7" viewBox="0 0 13.5 7"><rect x="0" y="0" width="13.2" height="1.2" fill="#75887a"/><rect x="0" y="2.4" width="13.2" height="1.2" fill="#75887a"/><rect x="0" y="4.8" width="13.2" height="1.2" fill="#75887a"/></svg>
<div class="a" style="left:633px;top:23.3px;width:17.7px;height:18px;background:#e5f1fb;border:1px solid #86c3ee;box-sizing:border-box;"></div>
<svg class="a" style="left:635px;top:29.6px;" width="13.5" height="7" viewBox="0 0 13.5 7"><rect x="0" y="0" width="13.2" height="1.2" fill="#666"/><rect x="0" y="2.4" width="13.2" height="1.2" fill="#666"/><rect x="0" y="4.8" width="13.2" height="1.2" fill="#666"/></svg>
<svg class="a" style="left:653.3px;top:32px;" width="13.5" height="7" viewBox="0 0 13.5 7"><rect x="0" y="0" width="13.2" height="1.2" fill="#75887a"/><rect x="0" y="2.4" width="13.2" height="1.2" fill="#75887a"/><rect x="0" y="4.8" width="13.2" height="1.2" fill="#75887a"/></svg>
<svg class="a" style="left:877px;top:35.5px;" width="6" height="6" viewBox="0 0 6 6"><rect x="0" y="0" width="6" height="1" fill="#222"/><path d="M0 2H6L3 5Z" fill="#111"/></svg>
<svg class="a" style="left:883px;top:57.5px;" width="6" height="6" viewBox="0 0 6 6"><rect x="0" y="0" width="6" height="1" fill="#222"/><path d="M0 2H6L3 5Z" fill="#111"/></svg>
<svg class="a" style="left:178px;top:49px;" width="14" height="13" viewBox="0 0 14 13"><path d="M0.5 0.5H6L8.5 3V12.5H0.5Z" fill="#f5f5f5" stroke="#666" stroke-width="1"/><path d="M2 10L4 3H5L7 10H5.8L5.3 8.3H3.7L3.2 10Z" fill="#0d97de"/><path d="M7.5 7L10 3.5L13 6.5L10.5 12.5Z" fill="#555"/></svg>
<svg class="a" style="left:198px;top:49px;" width="10" height="13" viewBox="0 0 10 13"><rect x="3.8" y="0" width="2" height="5" fill="#0d97de"/><rect x="0.5" y="4.5" width="8.5" height="2" fill="#0d97de"/><path d="M0.5 7H9V12.5H0Z" fill="#555"/></svg>
<div class="t" style="left:475.0px;top:49.46px;font-size:12.8px;line-height:12.8px;color:#5a5a5a;font-weight:700;font-family:'Liberation Serif', serif;">B</div>
<div class="t" style="left:494.5px;top:49.46px;font-size:12.8px;line-height:12.8px;color:#5f5f5f;font-weight:700;font-family:'Liberation Serif', serif;font-style:italic;">I</div>
<div class="t" style="left:510.6px;top:49.34px;font-size:12.0px;line-height:12.0px;color:#707070;font-weight:400;font-family:'Liberation Serif', serif;">U</div>
<div class="a" style="left:511px;top:60.6px;width:8.6px;height:1.1px;background:#707070;"></div>
<svg class="a" style="left:532px;top:51px;" width="12" height="10" viewBox="0 0 12 10"><rect x="0" y="0.0" width="9" height="1.1" fill="#6e786f"/><rect x="0" y="2.5" width="7" height="1.1" fill="#6e786f"/><rect x="0" y="5.0" width="9" height="1.1" fill="#6e786f"/><rect x="0" y="7.5" width="5.5" height="1.1" fill="#6e786f"/></svg>
<div class="a" style="left:546px;top:46px;width:18.4px;height:18.7px;background:#e5f1fb;border:1px solid #86c3ee;box-sizing:border-box;"></div>
<svg class="a" style="left:549.5px;top:51px;" width="12" height="10" viewBox="0 0 12 10"><rect x="0" y="0.0" width="11" height="1.1" fill="#666"/><rect x="1.5" y="2.5" width="8" height="1.1" fill="#666"/><rect x="0" y="5.0" width="11" height="1.1" fill="#666"/><rect x="2.5" y="7.5" width="6" height="1.1" fill="#666"/></svg>
<svg class="a" style="left:568px;top:51px;" width="12" height="10" viewBox="0 0 12 10"><rect x="0" y="0.0" width="10" height="1.1" fill="#6e786f"/><rect x="3" y="2.5" width="7" height="1.1" fill="#6e786f"/><rect x="0" y="5.0" width="10" height="1.1" fill="#6e786f"/><rect x="4" y="7.5" width="6" height="1.1" fill="#6e786f"/></svg>
<svg class="a" style="left:589px;top:52px;" width="12" height="7" viewBox="0 0 12 7"><circle cx="1.4" cy="1.4" r="1.4" fill="#0d97de"/><circle cx="1.4" cy="5.4" r="1.4" fill="#0d97de"/><rect x="4" y="0.7" width="7.5" height="1.4" fill="#555"/><rect x="4" y="4.7" width="7.5" height="1.4" fill="#555"/></svg>
<svg class="a" style="left:606.5px;top:52px;" width="14" height="7" viewBox="0 0 14 7"><rect x="0.7" y="0.7" width="6.5" height="5.6" rx="2.8" fill="none" stroke="#c4c4c4" stroke-width="1.4"/><rect x="6.3" y="0.7" width="6.5" height="5.6" rx="2.8" fill="none" stroke="#c4c4c4" stroke-width="1.4"/></svg>
<div class="t" style="left:630.6px;top:46.96px;font-size:13.4px;line-height:13.4px;color:#5a5a5a;font-weight:700;font-family:'Liberation Serif', serif;">A</div>
<div class="a" style="left:629.5px;top:59px;width:13.8px;height:3px;background:#111;"></div>
<svg class="a" style="left:647.0px;top:52.1px;" width="6" height="3" viewBox="0 0 6 3"><path d="M0 0H6L3.0 3Z" fill="#111"/></svg>
<svg class="a" style="left:676px;top:49px;" width="14" height="13" viewBox="0 0 14 13"><rect x="1.5" y="1.5" width="10" height="10" fill="none" stroke="#c4c4c4" stroke-width="1"/><rect x="3.5" y="3.5" width="6" height="6" fill="#a9d0e6"/><rect x="0" y="0" width="2.4" height="2.4" fill="#c0c0c0"/><rect x="11" y="0" width="2.4" height="2.4" fill="#c0c0c0"/><rect x="0" y="10.6" width="2.4" height="2.4" fill="#c0c0c0"/><rect x="11" y="10.6" width="2.4" height="2.4" fill="#c0c0c0"/></svg>
<svg class="a" style="left:694px;top:49px;" width="14" height="13" viewBox="0 0 14 13"><rect x="1" y="1" width="9" height="8" fill="#a9d0e6"/><rect x="0" y="0" width="2.2" height="2.2" fill="#c0c0c0"/><rect x="9" y="0" width="2.2" height="2.2" fill="#c0c0c0"/><rect x="0" y="8" width="2.2" height="2.2" fill="#c0c0c0"/><path d="M11 5V12H4" stroke="#c4c4c4" fill="none"/><rect x="11" y="10.6" width="2.4" height="2.4" fill="#c0c0c0"/></svg>
<svg class="a" style="left:716px;top:49px;" width="14" height="13" viewBox="0 0 14 13"><rect x="4" y="5" width="9" height="8" fill="#777"/><rect x="2" y="3" width="9" height="8" fill="#555"/><rect x="0" y="0" width="9" height="8" fill="#0d97de"/></svg>
<svg class="a" style="left:734px;top:49px;" width="14" height="13" viewBox="0 0 14 13"><rect x="4" y="5" width="9" height="8" fill="#0d97de"/><rect x="2" y="3" width="9" height="8" fill="#7a7a7a"/><rect x="0" y="0" width="9" height="8" fill="#555"/></svg>
<svg class="a" style="left:752px;top:49px;" width="14" height="13" viewBox="0 0 14 13"><rect x="0" y="0" width="7.5" height="7" fill="#0d97de"/><rect x="6" y="6" width="7.5" height="7" fill="#555"/><path d="M9 1.5L12 1.5M9 1.5L9 4.5" stroke="#555" stroke-width="1.2"/></svg>
<svg class="a" style="left:770px;top:49px;" width="14" height="13" viewBox="0 0 14 13"><rect x="0" y="0" width="7.5" height="7" fill="#555"/><rect x="6" y="6" width="7.5" height="7" fill="#0d97de"/><path d="M9 1.5L12 4.5M12 4.5H9.5M12 4.5V2" stroke="#555" stroke-width="1.2"/></svg>
<svg class="a" style="left:792px;top:49px;" width="13" height="12" viewBox="0 0 13 12"><rect x="0" y="0" width="1.8" height="12" fill="#9ccbe6"/><rect x="3" y="1.5" width="7" height="2.5" fill="#c2c2c2"/><rect x="3" y="5.5" width="9.5" height="2.5" fill="#c2c2c2"/></svg>
<svg class="a" style="left:810px;top:49px;" width="13" height="12" viewBox="0 0 13 12"><rect x="5.6" y="0" width="1.8" height="12" fill="#9ccbe6"/><rect x="2" y="1.5" width="9" height="2.5" fill="#c2c2c2"/><rect x="0.5" y="6" width="12" height="2.5" fill="#c2c2c2"/></svg>
<svg class="a" style="left:828px;top:49px;" width="13" height="12" viewBox="0 0 13 12"><rect x="11.2" y="0" width="1.8" height="12" fill="#9ccbe6"/><rect x="3" y="1.5" width="7" height="2.5" fill="#c2c2c2"/><rect x="0.5" y="5.5" width="9.5" height="2.5" fill="#c2c2c2"/></svg>
<svg class="a" style="left:846px;top:49px;" width="12.5" height="11" viewBox="0 0 12.5 11"><rect x="0" y="0" width="12.5" height="1.8" fill="#9ccbe6"/><rect x="1.5" y="3" width="2.5" height="8" fill="#c2c2c2"/><rect x="5.5" y="3" width="2.5" height="8" fill="#c2c2c2"/></svg>
<svg class="a" style="left:865px;top:49px;" width="12" height="11" viewBox="0 0 12 11"><rect x="0" y="4.6" width="12" height="1.8" fill="#9ccbe6"/><rect x="2" y="0.5" width="2.5" height="10" fill="#c2c2c2"/><rect x="7" y="0" width="2.5" height="11" fill="#c2c2c2"/></svg>
<svg class="a" style="left:184.5px;top:71px;" width="20" height="7" viewBox="0 0 20 7"><path d="M0.8 6.2L5.6 1.4" stroke="#5e6862" stroke-width="1.4"/><path d="M2 0.6H6.4V5Z" fill="#5e6862"/><path d="M12.8 0.8L18.2 6.2M18.2 0.8L12.8 6.2" stroke="#64706a" stroke-width="1.3"/></svg>
<svg class="a" style="left:184.5px;top:182.5px;" width="20" height="7" viewBox="0 0 20 7"><path d="M0.8 6.2L5.6 1.4" stroke="#5e6862" stroke-width="1.4"/><path d="M2 0.6H6.4V5Z" fill="#5e6862"/><path d="M12.8 0.8L18.2 6.2M18.2 0.8L12.8 6.2" stroke="#64706a" stroke-width="1.3"/></svg>
<svg class="a" style="left:184.5px;top:345.8px;" width="20" height="7" viewBox="0 0 20 7"><path d="M0.8 6.2L5.6 1.4" stroke="#5e6862" stroke-width="1.4"/><path d="M2 0.6H6.4V5Z" fill="#5e6862"/><path d="M12.8 0.8L18.2 6.2M18.2 0.8L12.8 6.2" stroke="#64706a" stroke-width="1.3"/></svg>
<svg class="a" style="left:870px;top:71px;" width="20" height="7" viewBox="0 0 20 7"><path d="M0.8 6.2L5.6 1.4" stroke="#5e6862" stroke-width="1.4"/><path d="M2 0.6H6.4V5Z" fill="#5e6862"/><path d="M12.8 0.8L18.2 6.2M18.2 0.8L12.8 6.2" stroke="#64706a" stroke-width="1.3"/></svg>
<svg class="a" style="left:870px;top:346px;" width="20" height="7" viewBox="0 0 20 7"><path d="M0.8 6.2L5.6 1.4" stroke="#5e6862" stroke-width="1.4"/><path d="M2 0.6H6.4V5Z" fill="#5e6862"/><path d="M12.8 0.8L18.2 6.2M18.2 0.8L12.8 6.2" stroke="#64706a" stroke-width="1.3"/></svg>
<svg class="a" style="left:582.7px;top:345.3px;" width="20" height="7" viewBox="0 0 20 7"><path d="M0.8 6.2L5.6 1.4" stroke="#5e6862" stroke-width="1.4"/><path d="M2 0.6H6.4V5Z" fill="#5e6862"/><path d="M12.8 0.8L18.2 6.2M18.2 0.8L12.8 6.2" stroke="#64706a" stroke-width="1.3"/></svg>
<svg class="a" style="left:52px;top:86.2px;" width="10" height="12.5" viewBox="0 0 10 12.5"><path d="M0.5 0.5H6L9.2 3.7V12H0.5Z" fill="#fff" stroke="#555" stroke-width="1"/><path d="M6 0.5V3.7H9.2Z" fill="#555"/><path d="M2.2 8.3H7M4.6 5.9V10.7" stroke="#0d97de" stroke-width="1.4"/></svg>
<svg class="a" style="left:70px;top:87px;" width="13.5" height="11" viewBox="0 0 13.5 11"><path d="M0.5 0H5L6 1.3H11V4H0.5Z" fill="#555"/><path d="M0 10.5L1.8 3.3H13.2L11.5 10.5Z" fill="#0d97de"/><path d="M4.3 7H8.7M6.5 4.9V9.1" stroke="#fff" stroke-width="1.3"/></svg>
<svg class="a" style="left:90.3px;top:86.3px;" width="10.5" height="12" viewBox="0 0 10.5 12"><path d="M5.25 0L10.5 5.4H7.8V12H2.7V5.4H0Z" fill="#a7cfe6"/></svg>
<svg class="a" style="left:110px;top:86.3px;" width="10.5" height="12" viewBox="0 0 10.5 12"><path d="M5.25 12L10.5 6.6H7.8V0H2.7V6.6H0Z" fill="#a7cfe6"/></svg>
<svg class="a" style="left:129.5px;top:87px;" width="12.5" height="10" viewBox="0 0 12.5 10"><path d="M12.5 5L7 0V2.5H0V7.5H7V10Z" fill="#b8d8a6"/></svg>
<svg class="a" style="left:148.5px;top:87px;" width="12.5" height="10" viewBox="0 0 12.5 10"><path d="M0 5L5.5 0V2.5H12.5V7.5H5.5V10Z" fill="#6ab800"/></svg>
<svg class="a" style="left:168px;top:86px;" width="13.5" height="12.5" viewBox="0 0 13.5 12.5"><rect x="0.5" y="0" width="7.5" height="2" fill="#5a5a5a"/><path d="M1.5 2V10.5H6M1.5 5.5H6" stroke="#888" stroke-width="1" fill="none"/><rect x="5" y="4.5" width="8" height="2" fill="#5a5a5a"/><rect x="5" y="6.5" width="8" height="3.5" fill="#0d97de"/><path d="M6.3 6L11.8 12M11.8 6L6.3 12" stroke="#e01010" stroke-width="1.6"/></svg>
<svg class="a" style="left:187.3px;top:85.3px;" width="13.5" height="13.5" viewBox="0 0 13.5 13.5"><circle cx="5.3" cy="5.3" r="4.2" fill="none" stroke="#0d97de" stroke-width="1.9"/><path d="M8.3 8.3L12.5 12.5" stroke="#555" stroke-width="2"/></svg>
<svg class="a" style="left:50px;top:363px;" width="13.5" height="10" viewBox="0 0 13.5 10"><path d="M0.5 0.5H10L13 3.5V9.5H0.5Z" fill="#fff" stroke="#666" stroke-width="1"/><rect x="2.5" y="2.5" width="7.5" height="5" fill="#f58ce0"/><path d="M4.5 5H8M6.2 3.3V6.7" stroke="#fff" stroke-width="1.2"/></svg>
<svg class="a" style="left:70px;top:362.5px;" width="13.5" height="11" viewBox="0 0 13.5 11"><path d="M0.5 0H5L6 1.3H11V4H0.5Z" fill="#555"/><path d="M0 10.5L1.8 3.3H13.2L11.5 10.5Z" fill="#0d97de"/><path d="M4.3 7H8.7M6.5 4.9V9.1" stroke="#fff" stroke-width="1.3"/></svg>
<svg class="a" style="left:90px;top:361px;" width="10.5" height="12" viewBox="0 0 10.5 12"><path d="M5.25 0L10.5 5.4H7.8V12H2.7V5.4H0Z" fill="#0d97de"/></svg>
<svg class="a" style="left:109.5px;top:361.5px;" width="10.5" height="12" viewBox="0 0 10.5 12"><path d="M5.25 12L10.5 6.6H7.8V0H2.7V6.6H0Z" fill="#0d97de"/></svg>
<svg class="a" style="left:129.5px;top:362px;" width="12.5" height="10" viewBox="0 0 12.5 10"><path d="M12.5 5L7 0V2.5H0V7.5H7V10Z" fill="#6ab800"/></svg>
<svg class="a" style="left:148.5px;top:362px;" width="12.5" height="10" viewBox="0 0 12.5 10"><path d="M0 5L5.5 0V2.5H12.5V7.5H5.5V10Z" fill="#6ab800"/></svg>
<svg class="a" style="left:168px;top:360.5px;" width="13.5" height="12.5" viewBox="0 0 13.5 12.5"><rect x="0.5" y="0" width="7.5" height="2" fill="#5a5a5a"/><path d="M1.5 2V10.5H6M1.5 5.5H6" stroke="#888" stroke-width="1" fill="none"/><rect x="5" y="4.5" width="8" height="2" fill="#5a5a5a"/><rect x="5" y="6.5" width="8" height="3.5" fill="#0d97de"/><path d="M6.3 6L11.8 12M11.8 6L6.3 12" stroke="#e01010" stroke-width="1.6"/></svg>
<svg class="a" style="left:187.3px;top:360px;" width="13.5" height="13.5" viewBox="0 0 13.5 13.5"><circle cx="5.3" cy="5.3" r="4.2" fill="none" stroke="#0d97de" stroke-width="1.9"/><path d="M8.3 8.3L12.5 12.5" stroke="#555" stroke-width="2"/></svg>
<svg class="a" style="left:108.3px;top:204.0px;" width="4.8" height="2.6" viewBox="0 0 4.8 2.6"><path d="M0 0H4.8L2.4 2.6Z" fill="#222"/></svg>
<svg class="a" style="left:119px;top:199px;" width="13" height="10" viewBox="0 0 13 10"><rect x="0" y="0" width="13" height="1.5" fill="#667766"/><rect x="0" y="4" width="13" height="1.5" fill="#667766"/><rect x="0" y="8" width="13" height="1.5" fill="#667766"/></svg>
<svg class="a" style="left:134.8px;top:204.3px;" width="4.4" height="2.4" viewBox="0 0 4.4 2.4"><path d="M0 0H4.4L2.2 2.4Z" fill="#333"/></svg>
<svg class="a" style="left:145px;top:197px;" width="13.5" height="13.5" viewBox="0 0 13.5 13.5"><circle cx="5.3" cy="5.3" r="4.2" fill="none" stroke="#0d97de" stroke-width="1.9"/><path d="M8.3 8.3L12.5 12.5" stroke="#555" stroke-width="2"/></svg>
<svg class="a" style="left:52.5px;top:107.5px;" width="6.5" height="6.5" viewBox="0 0 6.5 6.5"><path d="M6 0.3V6H0.3Z" fill="#333"/></svg>
<svg class="a" style="left:63.5px;top:105px;" width="10.5" height="12" viewBox="0 0 10.5 12"><path d="M0.6 0.6H6.2L9.4 3.8V11.4H0.6Z" fill="#fff" stroke="#707070" stroke-width="1"/><path d="M6 0.6V4H9.4Z" fill="#555"/></svg>
<svg class="a" style="left:67px;top:122.8px;" width="6.5" height="6.5" viewBox="0 0 6.5 6.5"><path d="M6 0.3V6H0.3Z" fill="#333"/></svg>
<svg class="a" style="left:78.5px;top:120.3px;" width="10.5" height="12" viewBox="0 0 10.5 12"><path d="M0.6 0.6H6.2L9.4 3.8V11.4H0.6Z" fill="#fff" stroke="#707070" stroke-width="1"/><path d="M6 0.6V4H9.4Z" fill="#555"/></svg>
<svg class="a" style="left:81.3px;top:138px;" width="6.5" height="6.5" viewBox="0 0 6.5 6.5"><path d="M6 0.3V6H0.3Z" fill="#333"/></svg>
<svg class="a" style="left:93px;top:135.5px;" width="10.5" height="12" viewBox="0 0 10.5 12"><path d="M0.6 0.6H6.2L9.4 3.8V11.4H0.6Z" fill="#fff" stroke="#707070" stroke-width="1"/><path d="M6 0.6V4H9.4Z" fill="#555"/></svg>
<svg class="a" style="left:108px;top:150.7px;" width="10.5" height="12" viewBox="0 0 10.5 12"><path d="M0.6 0.6H6.2L9.4 3.8V11.4H0.6Z" fill="#fff" stroke="#707070" stroke-width="1"/><path d="M6 0.6V4H9.4Z" fill="#555"/></svg>
<svg class="a" style="left:612px;top:379.7px;" width="10.5" height="12" viewBox="0 0 10.5 12"><path d="M0.6 0.6H6.2L9.4 3.8V11.4H0.6Z" fill="#fff" stroke="#707070" stroke-width="1"/><path d="M6 0.6V4H9.4Z" fill="#555"/></svg>
<svg class="a" style="left:70.5px;top:224px;" width="23.5" height="23.5" viewBox="0 0 23.5 23.5"><rect x="0.5" y="0.5" width="22.5" height="22.5" fill="#fff" stroke="#d8d8d8" stroke-width="1"/><rect x="1" y="19.5" width="21.5" height="3.5" fill="#d0d0d0"/><circle cx="14.5" cy="6.3" r="3.1" fill="#cfcfcf"/><path d="M1 13.5L7.4 8.8L15.8 13.5L22.5 9V19.5H1Z" fill="#0d9ae0"/></svg>
<div class="t" style="left:144.4px;top:288.83px;font-size:16.5px;line-height:16.5px;color:#0d97de;font-weight:700;font-family:'Liberation Serif', serif;">A</div>
<div class="a" style="left:159px;top:301.5px;width:8.3px;height:1.5px;background:#666;"></div>
<svg class="a" style="left:193px;top:214.5px;" width="14" height="123.5" viewBox="0 0 14 123.5"><path d="M4 9L7 6L10 9Z" fill="#777"/><path d="M4 114.5L7 117.5L10 114.5Z" fill="#777"/><rect x="1.5" y="16.8" width="11" height="12.4" rx="1.2" fill="#fafafa" stroke="#9a9a9a" stroke-width="0.9"/></svg>
<svg class="a" style="left:613px;top:361px;" width="14" height="13" viewBox="0 0 14 13"><rect x="0.5" y="0" width="7.5" height="2" fill="#c4c4c4"/><path d="M1.8 2V9.5H6" stroke="#c4c4c4" fill="none"/><rect x="4" y="9.5" width="9" height="3" fill="#a7cfe6"/><path d="M8.5 4L10.5 7H6.5Z" fill="#b8d8a6"/></svg>
<svg class="a" style="left:633px;top:361px;" width="13" height="13" viewBox="0 0 13 13"><path d="M0.5 0.5H6L7.5 2V10H0.5Z" fill="#f4f4f4" stroke="#c4c4c4" stroke-width="1"/><path d="M5 4.5H10.5L12.5 6.5V12.5H5Z" fill="#fff" stroke="#c4c4c4" stroke-width="1"/><rect x="6.5" y="8" width="4.5" height="1" fill="#a7cfe6"/><rect x="6.5" y="10" width="4.5" height="1" fill="#a7cfe6"/></svg>
<svg class="a" style="left:653.8px;top:361.5px;" width="10.5" height="12" viewBox="0 0 10.5 12"><path d="M5.25 0L10.5 5.4H7.8V12H2.7V5.4H0Z" fill="#a7cfe6"/></svg>
<svg class="a" style="left:673px;top:361.5px;" width="10.5" height="12" viewBox="0 0 10.5 12"><path d="M5.25 12L10.5 6.6H7.8V0H2.7V6.6H0Z" fill="#a7cfe6"/></svg>
<svg class="a" style="left:691.7px;top:361px;" width="13.5" height="12.5" viewBox="0 0 13.5 12.5"><rect x="0.5" y="0" width="7.5" height="2" fill="#c4c4c4"/><path d="M1.5 2V10.5H6M1.5 5.5H6" stroke="#d0d0d0" stroke-width="1" fill="none"/><rect x="5" y="4.5" width="8" height="2" fill="#c4c4c4"/><rect x="5" y="6.5" width="8" height="3.5" fill="#a7cfe6"/><path d="M6.3 6L11.8 12M11.8 6L6.3 12" stroke="#f0a0a0" stroke-width="1.4"/></svg>
<div class="a" style="left:708.8px;top:358.3px;width:18.3px;height:18.3px;background:#d3e8f8;border:1.5px solid #2d9ee0;box-sizing:border-box;"></div>
<svg class="a" style="left:711.5px;top:361px;" width="13" height="13" viewBox="0 0 13 13"><path d="M0 0.5H13L8 6V12.5L5 11V6Z" fill="#0d97de"/></svg>
<svg class="a" style="left:731px;top:360px;" width="13.5" height="13.5" viewBox="0 0 13.5 13.5"><circle cx="5.3" cy="5.3" r="4.2" fill="none" stroke="#0d97de" stroke-width="1.9"/><path d="M8.3 8.3L12.5 12.5" stroke="#555" stroke-width="2"/></svg>
<svg class="a" style="left:625.3px;top:159.3px;" width="13" height="13" viewBox="0 0 13 13"><rect x="0" y="0" width="12.5" height="5.8" fill="#6fbf00"/><path d="M6.3 2.3V12L8.6 10L10.4 13.5L12 12.7L10.3 9.4H13Z" fill="#555" stroke="#fff" stroke-width="0.7"/></svg>
<svg class="a" style="left:625.3px;top:175px;" width="13" height="13" viewBox="0 0 13 13"><rect x="0" y="0" width="12.5" height="5.8" fill="#6fbf00"/><path d="M6.3 2.3V12L8.6 10L10.4 13.5L12 12.7L10.3 9.4H13Z" fill="#555" stroke="#fff" stroke-width="0.7"/></svg>
<svg class="a" style="left:625.3px;top:190.3px;" width="13" height="13" viewBox="0 0 13 13"><rect x="0" y="0" width="12.5" height="5.8" fill="#6fbf00"/><path d="M6.3 2.3V12L8.6 10L10.4 13.5L12 12.7L10.3 9.4H13Z" fill="#555" stroke="#fff" stroke-width="0.7"/></svg>
<svg class="a" style="left:227.5px;top:386.9px;" width="13" height="13" viewBox="0 0 13 13"><rect x="0" y="0" width="12.5" height="5.8" fill="#6fbf00"/><path d="M6.3 2.3V12L8.6 10L10.4 13.5L12 12.7L10.3 9.4H13Z" fill="#555" stroke="#fff" stroke-width="0.7"/></svg>
<svg class="a" style="left:227.5px;top:402.5px;" width="13" height="13" viewBox="0 0 13 13"><rect x="0" y="0" width="12.5" height="5.8" fill="#6fbf00"/><path d="M6.3 2.3V12L8.6 10L10.4 13.5L12 12.7L10.3 9.4H13Z" fill="#555" stroke="#fff" stroke-width="0.7"/></svg>
<svg class="a" style="left:227.5px;top:417.9px;" width="13" height="13" viewBox="0 0 13 13"><rect x="0" y="0" width="12.5" height="5.8" fill="#6fbf00"/><path d="M6.3 2.3V12L8.6 10L10.4 13.5L12 12.7L10.3 9.4H13Z" fill="#555" stroke="#fff" stroke-width="0.7"/></svg>
<svg class="a" style="left:213px;top:70px;" width="14" height="10" viewBox="0 0 14 10"><rect x="3" y="0" width="10" height="7" fill="#0d97de"/><rect x="0" y="3" width="4" height="6.5" fill="#777"/><rect x="11" y="5" width="3" height="4.5" fill="#555"/><rect x="5" y="7" width="6" height="1.6" fill="#0d97de"/></svg>
<svg class="a" style="left:264.7px;top:71.8px;" width="6" height="6" viewBox="0 0 6 6"><path d="M0.5 0.5L5.5 5.5M5.5 0.5L0.5 5.5" stroke="#b4b4b4" stroke-width="1.1"/></svg>
<svg class="a" style="left:335.8px;top:72px;" width="6" height="6" viewBox="0 0 6 6"><path d="M0.5 0.5L5.5 5.5M5.5 0.5L0.5 5.5" stroke="#ababab" stroke-width="1.1"/></svg>
<svg class="a" style="left:593.0px;top:73.5px;" width="7" height="4" viewBox="0 0 7 4"><path d="M0 0H7L3.5 4Z" fill="#666"/></svg>
<svg class="a" style="left:404.5px;top:339px;" width="6" height="3.5" viewBox="0 0 6 3.5"><path d="M0 0H6L3 3.2Z" fill="#fff"/></svg>
<svg class="a" style="left:605.3px;top:311px;" width="3.5" height="5" viewBox="0 0 3.5 5"><path d="M0.3 0.3V4.7L2.7 2.5Z" fill="#fff"/></svg>
<svg class="a" style="left:207.5px;top:311px;" width="3.5" height="5" viewBox="0 0 3.5 5"><path d="M3.2 0.3V4.7L0.8 2.5Z" fill="#fff"/></svg>
<div class="a" style="left:258px;top:127px;width:38.7px;height:15.7px;background:rgba(160,160,160,0.55);"></div>
<div class="t" style="left:264.3px;top:130.08px;font-size:10.3px;line-height:10.3px;color:rgba(255,255,255,0.75);font-weight:400;font-family:'Liberation Sans', sans-serif;">y:</div>
<div class="t" style="left:275.8px;top:130.08px;font-size:10.3px;line-height:10.3px;color:rgba(255,255,255,0.75);font-weight:400;font-family:'Liberation Sans', sans-serif;">35</div>
<svg class="a" style="left:0px;top:0px;" width="900" height="480" viewBox="0 0 900 480"><rect x="18.75" y="260.2" width="25.45" height="25.2" fill="#fff" stroke="#555" stroke-width="1.6" stroke-dasharray="3.6 2.2" fill="none"/><rect x="213.8" y="135.3" width="25.2" height="25.4" fill="#fff" stroke="#555" stroke-width="1.6" stroke-dasharray="3.6 2.2" fill="none"/><rect x="420.6" y="121.3" width="25.7" height="24.3" fill="#fff" stroke="#555" stroke-width="1.6" stroke-dasharray="3.6 2.2" fill="none"/><rect x="47.5" y="208.8" width="73.5" height="64" fill="none" stroke="#ee2a7f" stroke-width="2"/><rect x="242.5" y="120.4" width="27.6" height="27.6" fill="none" stroke="#ee2a7f" stroke-width="2"/><rect x="402.2" y="135.3" width="15.6" height="14.6" fill="none" stroke="#ee2a7f" stroke-width="2"/><path d="M256.5 88.4V111" stroke="#ee2a7f" stroke-width="2.4"/><path d="M249.6 109.5H263.4L256.5 118.6Z" fill="#ee2a7f"/><path d="M121 207.9L313 157.3" stroke="#ee2a7f" stroke-width="2.3"/><path d="M319.6 155.5L310.6 150.5L313.8 164Z" fill="#ee2a7f"/></svg>
<svg class="a" style="left:0.4px;top:239.1px;" width="34" height="34" viewBox="0 0 34 34"><path d="M10.5,19.4 L8.3,6.4 A3,3 0 0 1 14.3,6.2 A2.5,2.5 0 0 1 19.3,5.8 A2.45,2.45 0 0 1 24.2,6 L24.2,11 A2.7,2.7 0 0 1 29.6,11 L29.5,20.5 L24,31.4 L13.1,31.4 L3,17 A2.3,2.3 0 0 1 6.6,14.4 L10.5,19.4 Z" fill="#efefef" stroke="#575757" stroke-width="1.9" stroke-linejoin="round"/><path d="M14.3,6.2 L14.6,15.6 M19.3,5.8 L19.3,14.5 M24.2,10.5 L24.1,15.6" stroke="#575757" stroke-width="1.9" stroke-linecap="round" fill="none"/></svg>
<svg class="a" style="left:195.8px;top:114.7px;" width="34" height="34" viewBox="0 0 34 34"><path d="M10.5,19.4 L8.3,6.4 A3,3 0 0 1 14.3,6.2 A2.5,2.5 0 0 1 19.3,5.8 A2.45,2.45 0 0 1 24.2,6 L24.2,11 A2.7,2.7 0 0 1 29.6,11 L29.5,20.5 L24,31.4 L13.1,31.4 L3,17 A2.3,2.3 0 0 1 6.6,14.4 L10.5,19.4 Z" fill="#efefef" stroke="#575757" stroke-width="1.9" stroke-linejoin="round"/><path d="M14.3,6.2 L14.6,15.6 M19.3,5.8 L19.3,14.5 M24.2,10.5 L24.1,15.6" stroke="#575757" stroke-width="1.9" stroke-linecap="round" fill="none"/></svg>
<svg class="a" style="left:402.9px;top:100.4px;" width="34" height="34" viewBox="0 0 34 34"><path d="M10.5,19.4 L8.3,6.4 A3,3 0 0 1 14.3,6.2 A2.5,2.5 0 0 1 19.3,5.8 A2.45,2.45 0 0 1 24.2,6 L24.2,11 A2.7,2.7 0 0 1 29.6,11 L29.5,20.5 L24,31.4 L13.1,31.4 L3,17 A2.3,2.3 0 0 1 6.6,14.4 L10.5,19.4 Z" fill="#efefef" stroke="#575757" stroke-width="1.9" stroke-linejoin="round"/><path d="M14.3,6.2 L14.6,15.6 M19.3,5.8 L19.3,14.5 M24.2,10.5 L24.1,15.6" stroke="#575757" stroke-width="1.9" stroke-linecap="round" fill="none"/></svg>
<div class="a" style="left:34.8px;top:275.6px;width:18.2px;height:18.2px;background:#ee2a7f;"></div>
<div class="t" style="left:39.90px;top:277.65px;font-size:14.2px;line-height:14.2px;color:#fff;transform-origin:0 0;transform:scaleX(1.2);">2</div>
<div class="a" style="left:229.8px;top:151.2px;width:18.2px;height:18.2px;background:#ee2a7f;"></div>
<div class="t" style="left:234.90px;top:153.25px;font-size:14.2px;line-height:14.2px;color:#fff;transform-origin:0 0;transform:scaleX(1.2);">1</div>
<div class="a" style="left:436.9px;top:136.8px;width:18.2px;height:18.2px;background:#ee2a7f;"></div>
<div class="t" style="left:442.00px;top:138.85px;font-size:14.2px;line-height:14.2px;color:#fff;transform-origin:0 0;transform:scaleX(1.2);">3</div>
<svg class="a" style="left:238px;top:116px;" width="36" height="36" viewBox="0 0 36 36"><rect x="9.4" y="19.1" width="7.8" height="7.5" fill="none" stroke="#555" stroke-width="0.9" stroke-dasharray="1.6 1.1"/><path d="M7.9 7.1V17.5L10.3 15.4L12.4 19.6L14.1 18.8L12.1 14.8H15.3Z" fill="#9a9a9a" stroke="#222" stroke-width="0.9" stroke-linejoin="round"/><rect x="16.6" y="23.4" width="7.9" height="7.6" fill="#fff" stroke="#222" stroke-width="1"/><path d="M18.5 27.2H22.6M20.55 25.2V29.2" stroke="#222" stroke-width="1"/></svg>
</body></html>
